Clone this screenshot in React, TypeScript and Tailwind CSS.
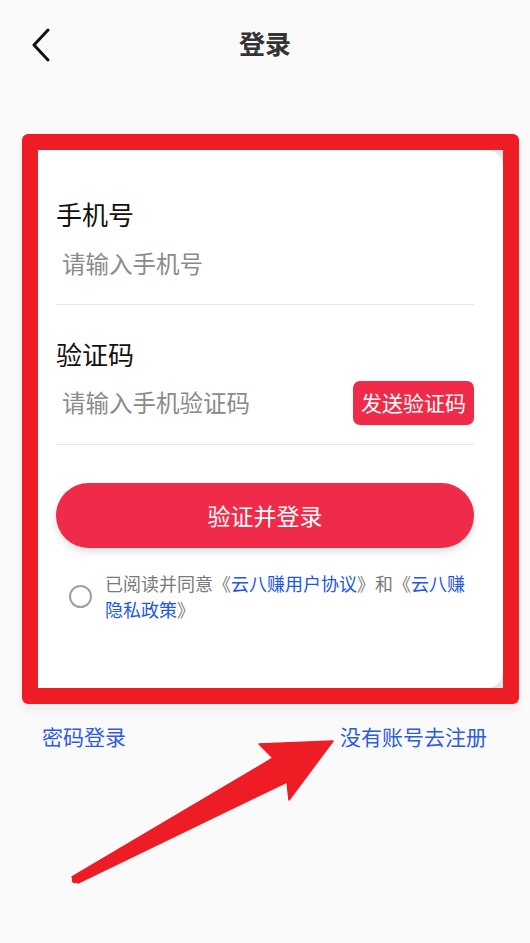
const cjk = { fontFamily: '"Noto Sans CJK SC", "Noto Sans", sans-serif' };

const App = () => {
  return (
    <div className="relative min-h-[943px] w-[530px] bg-[#fafafa]" style={cjk}>
      {/* header */}
      <div className="relative flex h-[88px] items-center justify-center">
        <svg className="absolute left-[31px] top-[28px]" width="20" height="34" viewBox="0 0 20 34">
          <path d="M17 2 L3 17 L17 32" fill="none" stroke="#111" strokeWidth="3" strokeLinecap="round" strokeLinejoin="round" />
        </svg>
        <h1 className="-mt-[2px] text-[26px] font-bold leading-[34px] text-[#333]">登录</h1>
      </div>

      {/* card with red annotation box */}
      <div className="ml-[22px] mr-[11px] mt-[46px] h-[570px] rounded-[6px] border-[16px] border-[#ee1c25] bg-[#e4e4e4] shadow-[0_6px_8px_rgba(0,0,0,0.06)]">
        <div className="h-full rounded-r-[16px] bg-white pl-[18px] pr-[29px] pt-[48px]">
          <div className="border-b border-[#e6e6e6] pb-[18px]">
            <div className="text-[26px] leading-[32px] text-[#111]">手机号</div>
            <div className="mt-[12px] flex h-[44px] items-center pl-[6px] text-[23.5px] text-[#8a8a8a]">请输入手机号</div>
          </div>

          <div className="mt-[33px] border-b border-[#e6e6e6] pb-[19px]">
            <div className="text-[26px] leading-[32px] text-[#111]">验证码</div>
            <div className="mt-[11px] flex h-[44px] items-center justify-between">
              <span className="pl-[6px] text-[23.5px] text-[#8a8a8a]">请输入手机验证码</span>
              <button className="h-[44px] w-[121px] rounded-[7px] bg-[#ef2b49] text-[21px] text-white">发送验证码</button>
            </div>
          </div>

          <button className="mt-[38px] h-[65px] w-full rounded-full bg-[#ef2b49] text-[23px] text-white shadow-[0_4px_8px_rgba(0,0,0,0.12)]">
            验证并登录
          </button>

          <div className="mt-[22px] flex items-center pl-[13px]">
            <span className="h-[23px] w-[23px] shrink-0 rounded-full border-2 border-[#a0a0a0]" />
            <p className="ml-[13px] flex-1 text-[18px] leading-[26px] text-[#7a7a7a]">
              已阅读并同意《<span className="text-[#2356e3]">云八赚用户协议</span>》和《<span className="text-[#2356e3]">云八赚隐私政策</span>》
            </p>
          </div>
        </div>
      </div>

      {/* bottom links */}
      <div className="mt-[18px] flex justify-between pl-[42px] pr-[43px] text-[21px] leading-[28px] text-[#2d5be3]">
        <span>密码登录</span>
        <span>没有账号去注册</span>
      </div>

      {/* annotation arrow */}
      <svg className="pointer-events-none absolute left-0 top-0" width="530" height="943" viewBox="0 0 530 943">
        <polygon
          points="72,877 273,758 259,744 333,741 289,800 287,782 78,883"
          fill="#ee1c25"
          strokeLinejoin="round"
          stroke="#ee1c25"
          strokeWidth="1.5"
        />
        <circle cx="75" cy="880" r="3.2" fill="#ee1c25" />
      </svg>
    </div>
  );
};

export default App;
